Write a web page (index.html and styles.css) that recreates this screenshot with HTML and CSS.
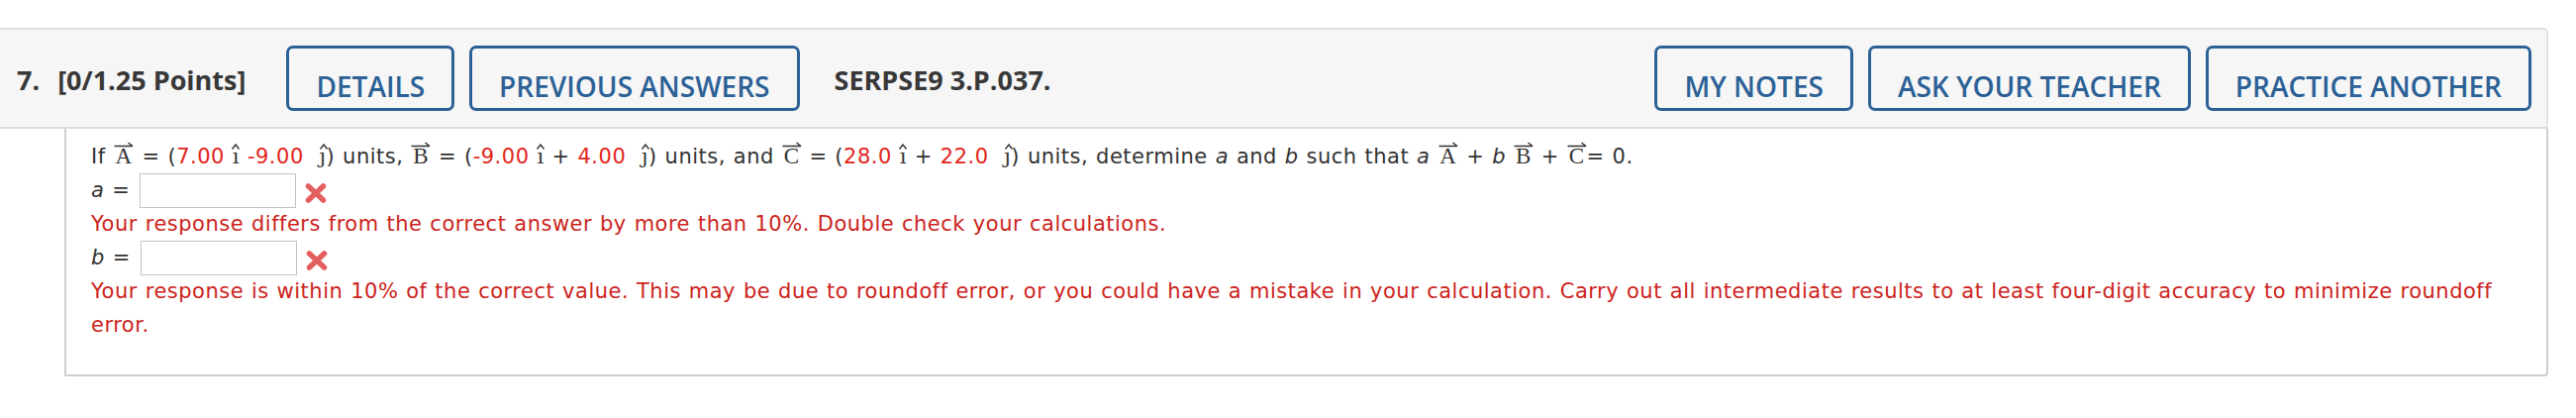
FILE: index.html
```html
<!DOCTYPE html>
<html>
<head>
<meta charset="utf-8">
<link rel="stylesheet" href="styles.css">
</head>
<body>
<div class="question">
  <div class="qhead">
    <div class="qtitle"><span class="qnum">7.</span>[0/1.25 Points]</div>
    <div class="qbtn">DETAILS</div>
    <div class="qbtn">PREVIOUS ANSWERS</div>
    <div class="qcode">SERPSE9 3.P.037.</div>
    <div class="qactions">
      <div class="qbtn">MY NOTES</div>
      <div class="qbtn">ASK YOUR TEACHER</div>
      <div class="qbtn">PRACTICE ANOTHER</div>
    </div>
  </div>
  <div class="qbody">
    <div class="stmt">If <span class="vec">A<svg class="arrow" width="20" height="6" viewBox="0 0 20 6"><path d="M0.5 4.5 H19 M14.5 1 L19 4.5"/></svg></span> = (<span class="num">7.00</span> <span class="uv">ı<svg class="hat" width="10" height="6" viewBox="0 0 10 6"><path d="M1.5 5.5 L5 1 L8.5 5.5"/></svg></span> <span class="num">-9.00</span>&nbsp; <span class="uv uvj">ȷ<svg class="hat" width="10" height="6" viewBox="0 0 10 6"><path d="M1.5 5.5 L5 1 L8.5 5.5"/></svg></span>) units, <span class="vec">B<svg class="arrow" width="20" height="6" viewBox="0 0 20 6"><path d="M0.5 4.5 H19 M14.5 1 L19 4.5"/></svg></span> = (<span class="num">-9.00</span> <span class="uv">ı<svg class="hat" width="10" height="6" viewBox="0 0 10 6"><path d="M1.5 5.5 L5 1 L8.5 5.5"/></svg></span> + <span class="num">4.00</span>&nbsp; <span class="uv uvj">ȷ<svg class="hat" width="10" height="6" viewBox="0 0 10 6"><path d="M1.5 5.5 L5 1 L8.5 5.5"/></svg></span>) units, and <span class="vec">C<svg class="arrow" width="20" height="6" viewBox="0 0 20 6"><path d="M0.5 4.5 H19 M14.5 1 L19 4.5"/></svg></span> = (<span class="num">28.0</span> <span class="uv">ı<svg class="hat" width="10" height="6" viewBox="0 0 10 6"><path d="M1.5 5.5 L5 1 L8.5 5.5"/></svg></span> + <span class="num">22.0</span>&nbsp; <span class="uv uvj">ȷ<svg class="hat" width="10" height="6" viewBox="0 0 10 6"><path d="M1.5 5.5 L5 1 L8.5 5.5"/></svg></span>) units, determine <i>a</i> and <i>b</i> such that <i>a</i> <span class="vec">A<svg class="arrow" width="20" height="6" viewBox="0 0 20 6"><path d="M0.5 4.5 H19 M14.5 1 L19 4.5"/></svg></span> + <i>b</i> <span class="vec">B<svg class="arrow" width="20" height="6" viewBox="0 0 20 6"><path d="M0.5 4.5 H19 M14.5 1 L19 4.5"/></svg></span> + <span class="vec">C<svg class="arrow" width="20" height="6" viewBox="0 0 20 6"><path d="M0.5 4.5 H19 M14.5 1 L19 4.5"/></svg></span>= 0.</div>
    <div class="ansrow"><span class="lbl"><i>a</i> =</span><input class="ans" type="text"><svg class="wrong" width="24" height="22" viewBox="0 0 24 22"><path d="M4.5 4 L19.5 18 M19.5 4 L4.5 18"/></svg></div>
    <div class="msg">Your response differs from the correct answer by more than 10%. Double check your calculations.</div>
    <div class="ansrow"><span class="lbl"><i>b</i> =</span><input class="ans" type="text"><svg class="wrong" width="24" height="22" viewBox="0 0 24 22"><path d="M4.5 4 L19.5 18 M19.5 4 L4.5 18"/></svg></div>
    <div class="msg">Your response is within 10% of the correct value. This may be due to roundoff error, or you could have a mistake in your calculation. Carry out all intermediate results to at least four-digit accuracy to minimize roundoff error.</div>
  </div>
</div>
</body>
</html>
```
FILE: styles.css
```css
html, body {
  margin: 0;
  padding: 0;
  background: #ffffff;
}

body {
  font-family: "DejaVu Sans", Verdana, sans-serif;
}

.question {
  width: 2574px;
  margin-top: 28px;
}

.qhead {
  display: flex;
  align-items: center;
  box-sizing: border-box;
  height: 102px;
  background: #f6f6f6;
  border-top: 2px solid #e0e0e0;
  border-bottom: 2px solid #dcdcdc;
  border-right: 2px solid #e2e2e2;
  border-top-right-radius: 5px;
  padding: 0 15px 0 17px;
  font-family: "Open Sans", sans-serif;
}

.qtitle {
  font-weight: 700;
  font-size: 27px;
  color: #383838;
  margin-right: 41px;
  padding-top: 3px;
}

.qnum {
  margin-right: 18px;
}

.qbtn {
  box-sizing: border-box;
  height: 66px;
  padding: 20px 27px 0;
  border: 3px solid #2c6196;
  border-radius: 7px;
  color: #2c6196;
  font-size: 28px;
  font-weight: 600;
  line-height: 36px;
  white-space: nowrap;
  margin-right: 15px;
}

.qcode {
  font-weight: 700;
  font-size: 27px;
  color: #383838;
  margin-left: 20px;
  padding-top: 3px;
}

.qactions {
  margin-left: auto;
  display: flex;
}

.qactions .qbtn:last-child {
  margin-right: 0;
}

.qbody {
  margin-left: 65px;
  border: 2px solid #cfcfcf;
  border-top: 0;
  border-bottom-right-radius: 4px;
  padding: 11px 25px 33px 25px;
  font-size: 21px;
  line-height: 34px;
  letter-spacing: 0.5px;
  word-spacing: 0.7px;
  color: #333333;
}

.num {
  color: #e2251c;
}

.vec {
  position: relative;
  display: inline-block;
  font-family: "Liberation Serif", "DejaVu Serif", serif;
  font-size: 23px;
  padding: 0 2px;
}

.arrow {
  position: absolute;
  top: 2px;
  left: 50%;
  transform: translateX(-50%);
}

.arrow path,
.hat path {
  fill: none;
  stroke: #333333;
  stroke-width: 1.4;
}

.uv {
  position: relative;
  display: inline-block;
  font-family: "DejaVu Serif", serif;
  font-size: 21px;
}

.hat {
  position: absolute;
  top: 4px;
  left: 50%;
  transform: translateX(-50%);
}

.uvj .hat {
  left: 62%;
}

.ansrow {
  display: flex;
  align-items: center;
  height: 34px;
}

.lbl {
  margin-right: 10px;
}

.ans {
  box-sizing: border-box;
  width: 158px;
  height: 35px;
  margin: 0;
  border: 1.5px solid #c4c4c4;
  background: #ffffff;
  padding: 0;
}

.wrong {
  margin-left: 8px;
  margin-top: 6px;
}

.wrong path {
  fill: none;
  stroke: #e35f5f;
  stroke-width: 5.5;
  stroke-linecap: round;
}

.msg {
  color: #cc2420;
}
```
